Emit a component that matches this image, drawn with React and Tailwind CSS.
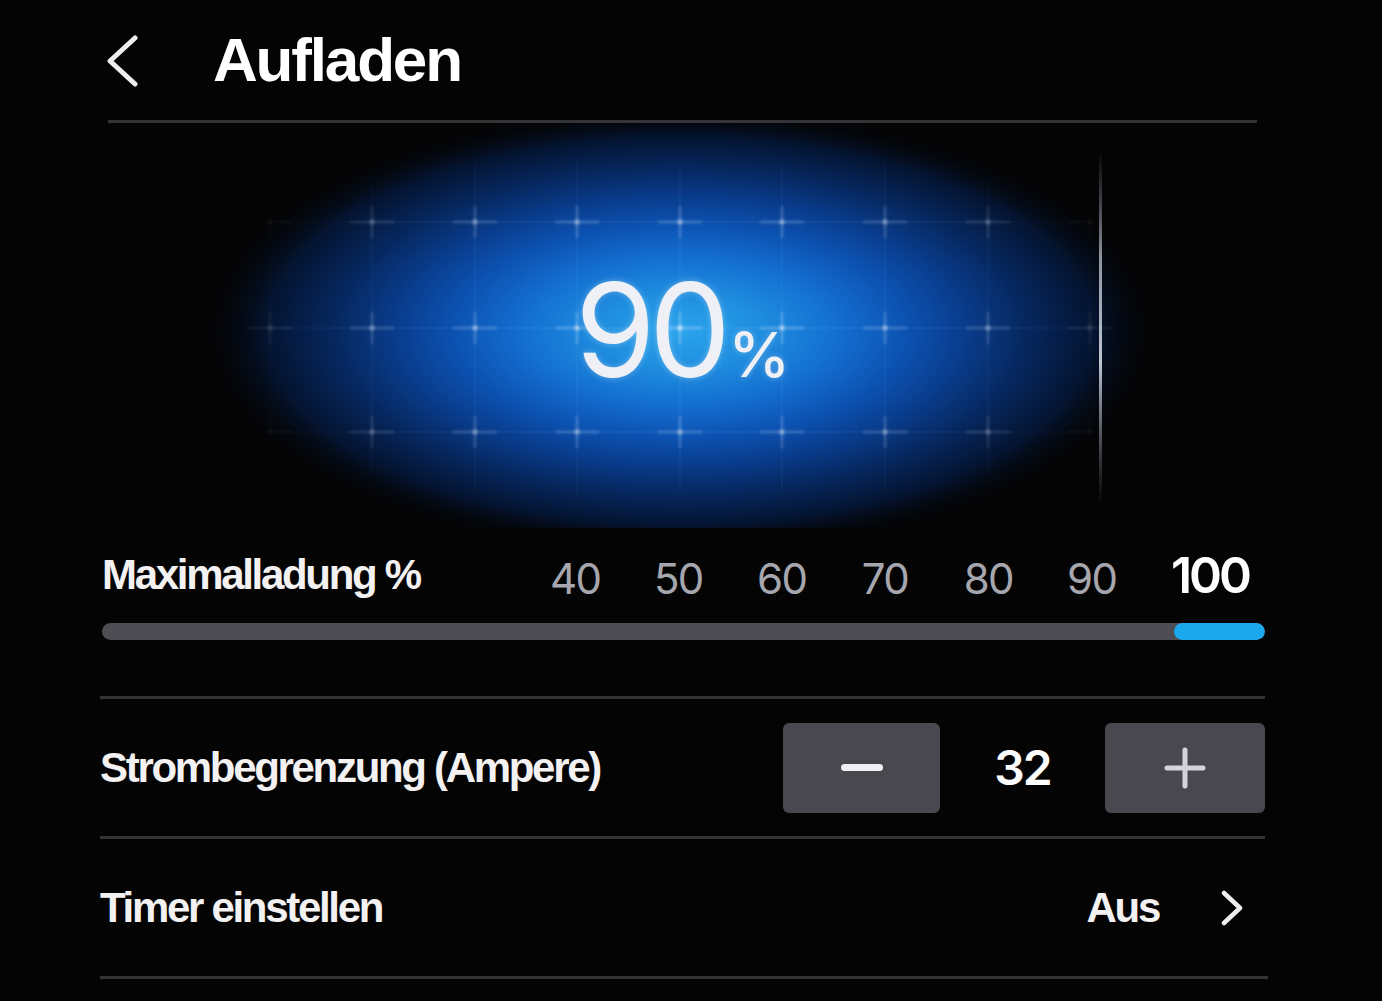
import React from 'react';

const cols = [170, 272, 375, 477, 580, 682, 785, 888, 990];
const rows = [99, 205, 309];

// blue glow and grid of glowing points behind the charge value
const GlowGrid = () => (
  <svg className="absolute inset-0" width="1165" height="405" viewBox="0 0 1165 405">
    <defs>
      <radialGradient id="glow" cx="580" cy="208" r="480" gradientUnits="userSpaceOnUse" gradientTransform="translate(580 208) scale(1 0.47) translate(-580 -208)">
        <stop offset="0" stopColor="#2aa3ec" />
        <stop offset="0.16" stopColor="#1f8fe0" />
        <stop offset="0.32" stopColor="#1470d2" />
        <stop offset="0.47" stopColor="#0c52b2" />
        <stop offset="0.6" stopColor="#093b8a" />
        <stop offset="0.73" stopColor="#06265c" />
        <stop offset="0.86" stopColor="#041431" />
        <stop offset="1" stopColor="#040405" stopOpacity="0" />
      </radialGradient>
      <radialGradient id="fade" cx="580" cy="205" r="470" gradientUnits="userSpaceOnUse" gradientTransform="translate(580 205) scale(1 0.55) translate(-580 -205)">
        <stop offset="0" stopColor="#fff" stopOpacity="1" />
        <stop offset="0.7" stopColor="#fff" stopOpacity="0.6" />
        <stop offset="1" stopColor="#fff" stopOpacity="0" />
      </radialGradient>
      <mask id="m">
        <rect width="1165" height="405" fill="url(#fade)" />
      </mask>
      <filter id="blur" x="-50%" y="-50%" width="200%" height="200%">
        <feGaussianBlur stdDeviation="1.6" />
      </filter>
      <linearGradient id="vline" x1="0" y1="0" x2="0" y2="1">
        <stop offset="0" stopColor="#9aa3b5" stopOpacity="0" />
        <stop offset="0.3" stopColor="#c9cfdb" stopOpacity="0.7" />
        <stop offset="0.6" stopColor="#dfe4ee" stopOpacity="0.85" />
        <stop offset="1" stopColor="#9aa3b5" stopOpacity="0" />
      </linearGradient>
    </defs>
    <rect width="1165" height="405" fill="url(#glow)" />
    <g mask="url(#m)">
      {rows.map((y) => (
        <line key={'h' + y} x1="60" x2="1100" y1={y} y2={y} stroke="#9fd0ff" strokeOpacity="0.1" strokeWidth="1.5" />
      ))}
      {cols.map((x) => (
        <line key={'v' + x} x1={x} x2={x} y1="40" y2="370" stroke="#9fd0ff" strokeOpacity="0.08" strokeWidth="1.5" />
      ))}
      <g filter="url(#blur)">
        {rows.map((y) =>
          cols.map((x) => (
            <g key={x + '-' + y}>
              <line x1={x - 22} x2={x + 22} y1={y} y2={y} stroke="#d8ecff" strokeOpacity="0.4" strokeWidth="2" />
              <line x1={x} x2={x} y1={y - 16} y2={y + 16} stroke="#d8ecff" strokeOpacity="0.4" strokeWidth="2" />
              <circle cx={x} cy={y} r="2.4" fill="#f2f8ff" fillOpacity="0.8" />
            </g>
          ))
        )}
      </g>
    </g>
    <rect x="999" y="27" width="3" height="355" fill="url(#vline)" />
  </svg>
);

const Divider = ({ className = '' }) => <div className={`h-[3px] bg-[#343438] ${className}`} />;

const labelCls = "text-[42px] font-bold tracking-[-0.055em] text-[#f3f1f2] leading-none [font-family:'Liberation_Sans',Arial,sans-serif]";

export default function App() {
  const steps = ['40', '50', '60', '70', '80', '90'];

  return (
    <div className="w-[1382px] h-[1001px] overflow-hidden bg-[#040405] [font-family:'Liberation_Sans',Arial,sans-serif]">
      <div className="ml-[100px] w-[1165px] flex flex-col">
        {/* Header */}
        <div className="h-[120px] flex items-center">
          <svg className="ml-[5px] mt-[2px]" width="34" height="52" viewBox="0 0 34 52" fill="none">
            <path d="M30 3 L5 26 L30 49" stroke="#f0eef0" strokeWidth="5" strokeLinecap="round" strokeLinejoin="round" />
          </svg>
          <h1 className="ml-[74px] text-[62px] font-bold tracking-[-0.035em] text-white leading-none">Aufladen</h1>
        </div>
        <Divider className="ml-[8px] w-[1149px]" />

        {/* Charge level glow */}
        <div className="relative h-[405px]">
          <GlowGrid />
          <div className="absolute inset-0 flex items-center justify-center">
            <div className="flex items-baseline mt-[8px] text-[#eef0f6] [font-family:Inter,'Noto_Sans',sans-serif] [text-shadow:0_0_6px_rgba(255,255,255,0.35)]">
              <span className="text-[130px] font-normal tracking-[-0.05em] leading-none">90</span>
              <span className="text-[62px] font-medium leading-none ml-[4px]">%</span>
            </div>
          </div>
        </div>

        {/* Max charge */}
        <div className="mt-[22px] h-[50px] flex items-center">
          <span className={labelCls + ' ml-[2px]'}>Maximalladung %</span>
          <div className="ml-auto mr-[15px] w-[700px] flex items-center justify-between [font-family:Inter,'Noto_Sans',sans-serif]">
            {steps.map((s) => (
              <span key={s} className="w-[50px] text-center text-[42px] font-normal tracking-[-0.04em] text-[#a6a7ae] leading-none mt-[8px]">{s}</span>
            ))}
            <span className="w-[80px] text-center text-[50px] font-semibold tracking-[-0.06em] text-white leading-none">100</span>
          </div>
        </div>
        <div className="mt-[23px] ml-[2px] h-[17px] rounded-full bg-[#4d4d53] flex justify-end overflow-hidden">
          <div className="w-[91px] h-full rounded-full bg-[#1ba8ec]" />
        </div>
        <Divider className="mt-[56px]" />

        {/* Current limit */}
        <div className="h-[137px] flex items-center">
          <span className={labelCls}>Strombegrenzung (Ampere)</span>
          <div className="ml-auto flex items-center">
            <button className="w-[157px] h-[90px] rounded-[6px] bg-[#48484e] flex items-center justify-center">
              <span className="w-[42px] h-[7px] rounded-full bg-[#f2f0f2]" />
            </button>
            <span className="w-[165px] text-center text-[48px] font-semibold tracking-[-0.04em] text-white leading-none [font-family:Inter,'Noto_Sans',sans-serif]">32</span>
            <button className="w-[160px] h-[90px] rounded-[6px] bg-[#48484e] flex items-center justify-center">
              <svg width="44" height="44" viewBox="0 0 44 44">
                <path d="M22 4 V40 M4 22 H40" stroke="#d4d4da" strokeWidth="5" strokeLinecap="round" />
              </svg>
            </button>
          </div>
        </div>
        <Divider />

        {/* Timer */}
        <div className="h-[137px] flex items-center">
          <span className={labelCls}>Timer einstellen</span>
          <span className={labelCls + ' ml-auto'}>Aus</span>
          <svg className="ml-[60px] mr-[20px]" width="26" height="36" viewBox="0 0 26 36" fill="none">
            <path d="M5 3 L21 18 L5 33" stroke="#f0eef0" strokeWidth="4.5" strokeLinecap="round" strokeLinejoin="round" />
          </svg>
        </div>
        <Divider className="w-[1168px]" />
      </div>
    </div>
  );
}
